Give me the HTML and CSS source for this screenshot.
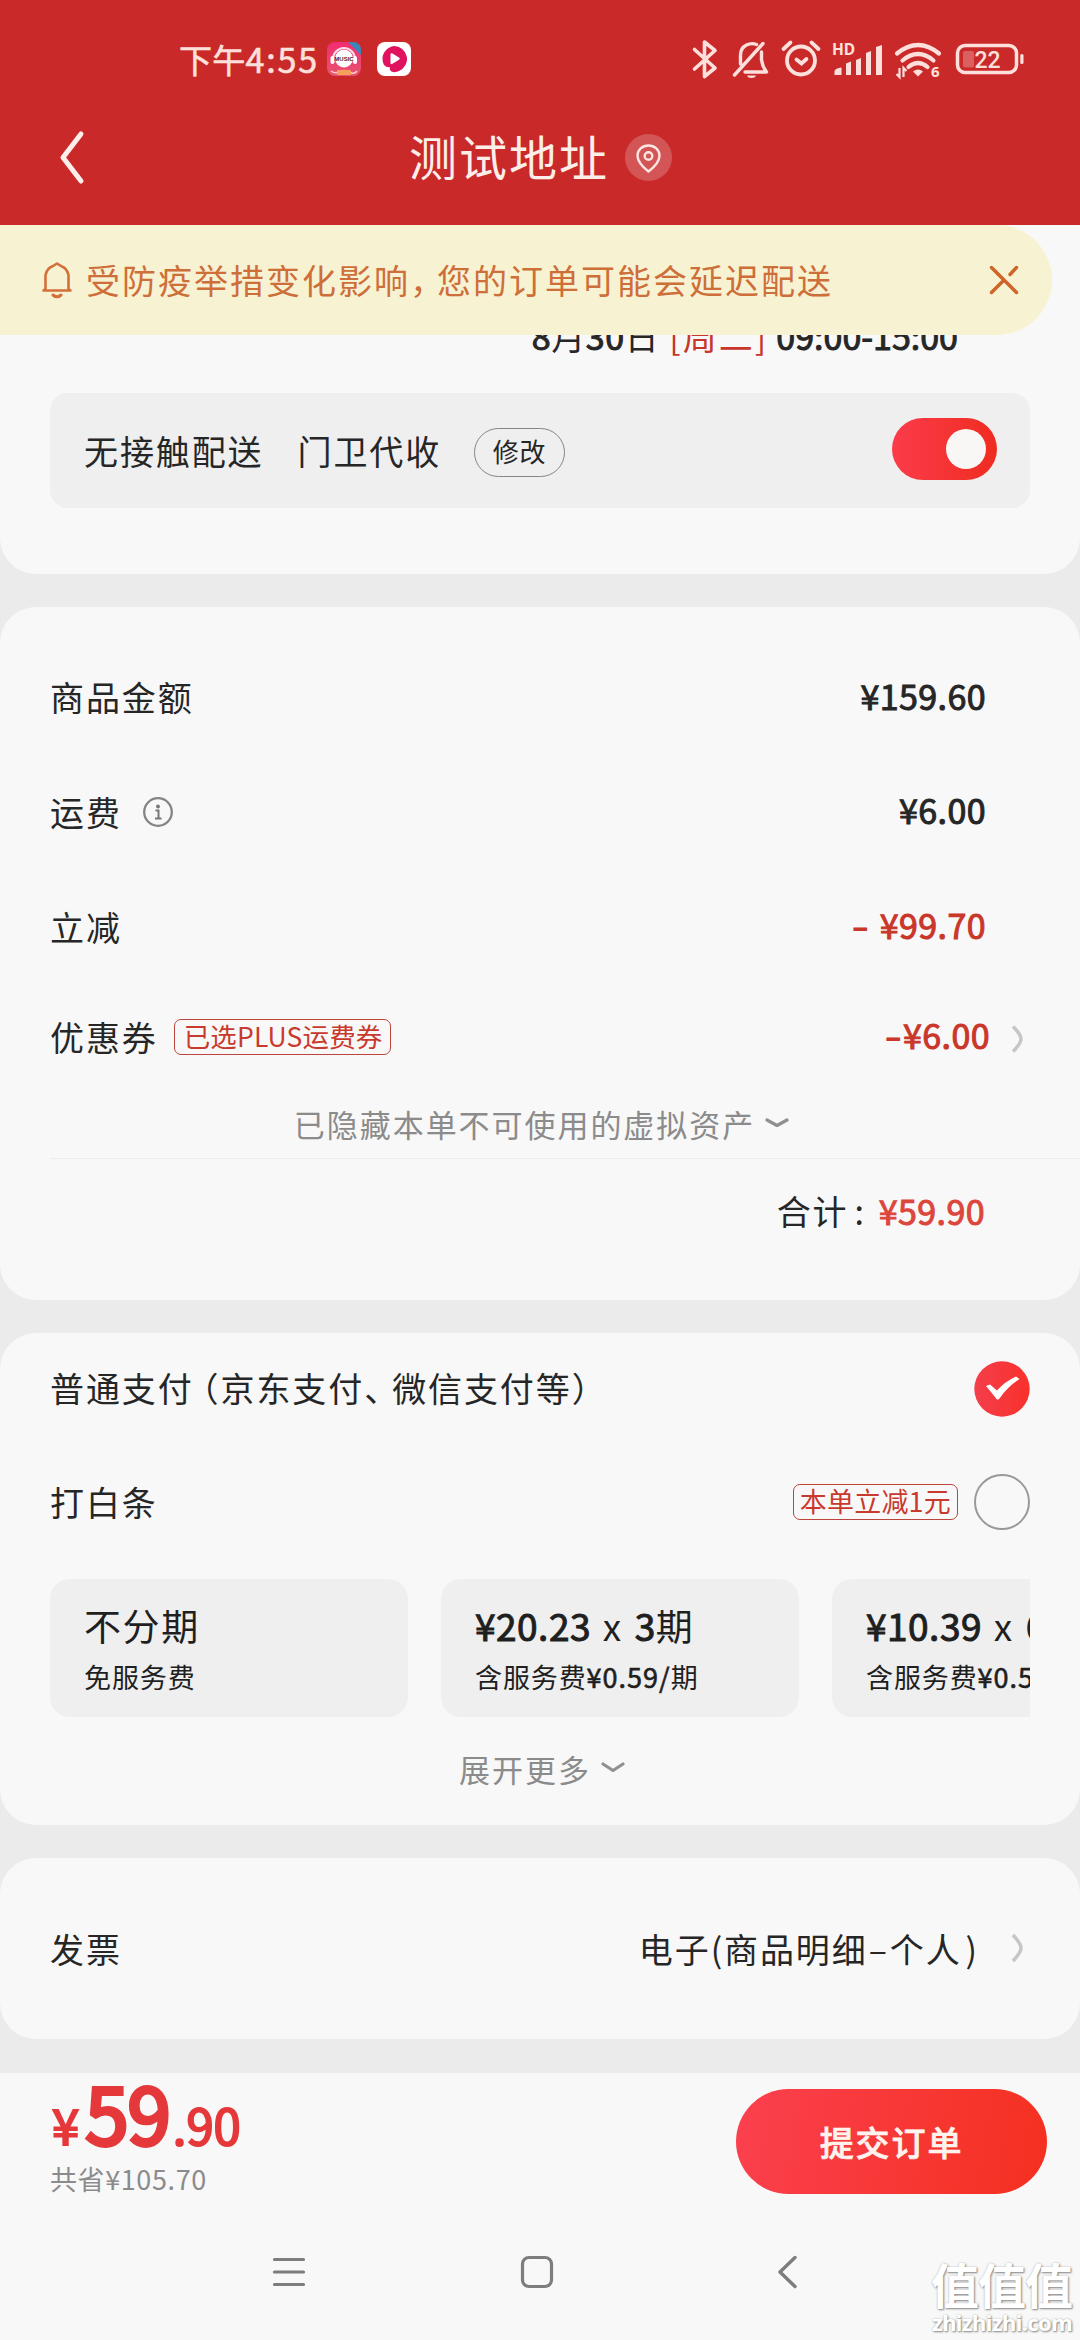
FILE: index.html
```html
<!DOCTYPE html>
<html lang="zh-CN">
<head>
<meta charset="utf-8">
<title>测试地址</title>
<link rel="stylesheet" href="styles.css">
</head>
<body>
<div class="screen">
  <header class="header">
    <div class="status">
      <span class="clock">下午<span class="digits">4:55</span></span>
      <svg class="app-icon" width="34" height="34" viewBox="0 0 34 34">
        <defs><linearGradient id="mg" x1="0" y1="0" x2="0" y2="1"><stop offset="0" stop-color="#f02c72"/><stop offset="1" stop-color="#e8556f"/></linearGradient></defs>
        <rect width="34" height="34" rx="8" fill="url(#mg)"/>
        <path d="M21 0h5a8 8 0 0 1 8 8v5z" fill="#3a86b8"/>
        <path d="M6 17a11 11 0 0 1 22 0" fill="none" stroke="#fbdbe8" stroke-width="2"/>
        <circle cx="17" cy="16.500" r="9" fill="#fff"/>
        <rect x="3.500" y="14" width="4" height="8" rx="2" fill="#fff"/>
        <rect x="26" y="14" width="4" height="8" rx="2" fill="#fff"/>
        <text x="17" y="18.800" class="music-word" text-anchor="middle">MUSIC</text>
        <path d="M4 29q4 3 8 1 5-3 10 0t8-1" fill="none" stroke="#ffd0c4" stroke-width="1.500"/>
        <rect x="10" y="28" width="14" height="5" rx="1" fill="#f5a15c"/>
      </svg>
      <svg class="app-icon second" width="34" height="34" viewBox="0 0 34 34">
        <rect width="34" height="34" rx="8" fill="#fff"/>
        <path d="M17 4a13 13 0 0 1 5 25q-3 1.500-6 1-4-1-3-5-3 1-6-2A13 13 0 0 1 17 4z" fill="#e0115f"/>
        <path d="M13.500 12.500q0-2 2-1l6.500 4q1.800 1.200 0 2.300l-6.500 4q-2 1-2-1z" fill="#fff"/>
      </svg>
      <div class="status-right">
        <svg width="42" height="60" viewBox="6 0 42 60"><path d="M13.500 19.500 34 38l-10.500 8.500V12L34 20.500 13.500 39" fill="none" stroke="#fde0dc" stroke-width="3.600" stroke-linejoin="round" stroke-linecap="round"/></svg>
        <svg width="48" height="60" viewBox="48 0 48 60" fill="none" stroke="#fde0dc" stroke-width="3.400" stroke-linecap="round" stroke-linejoin="round"><path d="M53.500 45 82 13.500M59.500 34V25q0-7 6-10 5-2.500 10-.5M80.500 22v8q1 7 5 12H64"/><path d="M66 45.500h9q-1 2.500-4.500 2.500t-4.500-2.500z" fill="#fde0dc" stroke="none"/></svg>
        <svg width="50" height="60" viewBox="96 0 50 60" fill="none" stroke="#fde0dc" stroke-width="3.800" stroke-linecap="round"><circle cx="120" cy="30.500" r="14"/><path d="m102.500 19 7-6.500M130.500 12.500l7 6.500M115.500 29.500l5 4 5-4.500"/></svg>
        <svg width="62" height="60" viewBox="146 0 62 60" fill="#fde0dc"><text class="hd" x="151" y="24.500">HD</text><path d="M153.500 45v-4q1-3 7-3.500V45zM165 45V33.500l5-2V45zM175 45V30l5-2V45zM185 45V23l5-2v24zM195 45V17l6-2v30z"/></svg>
        <svg width="60" height="60" viewBox="208 0 60 60"><g fill="none" stroke="#fde0dc" stroke-width="4.200" stroke-linecap="round"><path d="M216 23.500q21-17 42 0M221.500 30.500q15.500-13 31 0M227.500 37q9.500-8 19 0"/></g><path d="m237 46.500-5-5q5-4 10 0z" fill="#fde0dc"/><path d="M218.500 38v9l-3-3M222.500 47v-9l3 3" fill="none" stroke="#fde0dc" stroke-width="2.200"/><text class="six" x="250" y="47" fill="#fde0dc">6</text></svg>
        <svg width="76" height="60" viewBox="268 0 76 60"><rect x="276.500" y="15.500" width="59" height="27" rx="7.500" fill="none" stroke="#fde0dc" stroke-width="3.500"/><rect x="282" y="21" width="11" height="16.500" rx="2" fill="#dc5f60"/><text class="pct" x="293.500" y="38" fill="#fde0dc">22</text><rect x="339.300" y="24" width="3.200" height="10" rx="1.500" fill="#fde0dc"/></svg>
      </div>
    </div>
    <div class="titlebar">
      <svg class="back" width="30" height="60" viewBox="0 0 30 60"><path d="M24 7 6 30.500 24 54" fill="none" stroke="#fdeeea" stroke-width="5" stroke-linecap="round" stroke-linejoin="round"/></svg>
      <h1 class="title">测试地址</h1>
      <svg class="pin" width="47" height="47" viewBox="0 0 47 47"><circle cx="23.500" cy="23.500" r="23.500" fill="#d35556"/><g fill="none" stroke="#fde6e2" stroke-width="2.400" stroke-linejoin="round"><path d="M23.500 37.500Q12.500 29 12.500 21.500a11 10 0 0 1 22 0Q34.500 29 23.500 37.500z"/><circle cx="23.500" cy="22" r="3.800"/></g></svg>
    </div>
  </header>

  <main class="content">
    <div class="notice">
      <svg width="32" height="40" viewBox="0 0 32 40"><path d="M4.500 29V15q1.500-7 7.500-9l4-2.500L20 6q6 2 7.500 9v14l2 1.500h-27z" fill="none" stroke="#d3703a" stroke-width="2.600" stroke-linejoin="round"/><path d="M12 35q4 3.500 8 0" fill="none" stroke="#d3703a" stroke-width="3" stroke-linecap="round"/></svg>
      <p class="notice-text">受防疫举措变化影响<span class="half comma">，</span>您的订单可能会延迟配送</p>
      <svg class="close" width="32" height="32" viewBox="0 0 32 32"><path d="m3.500 3.500 25 25M3.500 28.500l12-12M22 10.500l6.500-7" stroke="#cf6427" stroke-width="3.400" stroke-linecap="round"/></svg>
    </div>

    <section class="card delivery">
      <p class="date"><b>8</b>月<b>30</b>日<em>[周二]</em><b>09:00-15:00</b></p>
      <div class="contactless">
        <span>无接触配送</span><span class="place">门卫代收</span>
        <span class="modify">修改</span>
        <span class="toggle"><i class="knob"></i></span>
      </div>
    </section>

    <section class="card amounts">
      <div class="row goods"><span>商品金额</span><b class="price">¥159.60</b></div>
      <div class="row fee"><span>运费</span>
        <svg class="info" width="32" height="32" viewBox="0 0 32 32"><circle cx="16" cy="16" r="13.800" fill="none" stroke="#848484" stroke-width="2.300"/><circle cx="16" cy="10.500" r="1.900" fill="#777"/><path d="M13.500 14.500h3v8M13 22.500h6.500" fill="none" stroke="#777" stroke-width="2"/></svg>
        <b class="price">¥6.00</b></div>
      <div class="row cut"><span>立减</span><b class="price red"><span class="minus spaced">-</span>¥99.70</b></div>
      <div class="row coupon"><span>优惠券</span><span class="tag">已选PLUS运费券</span><b class="price red"><span class="minus">-</span>¥6.00</b>
        <svg class="arrow" width="14" height="32" viewBox="0 0 14 32"><path d="M3 3.500q8 8 8 12.500t-8 12.500" fill="none" stroke="#c6c6c6" stroke-width="3.500"/></svg></div>
      <div class="more hidden-assets"><span>已隐藏本单不可使用的虚拟资产</span><svg width="24" height="12" viewBox="0 0 24 12"><path d="m2 3 10 5.500L22 3" fill="none" stroke="#909090" stroke-width="3.200" stroke-linejoin="round" stroke-linecap="round"/></svg></div>
      <div class="total"><span>合计<span class="colon">:</span></span><b class="price total-price">¥59.90</b></div>
    </section>

    <section class="card pay">
      <div class="row normal"><span>普通支付<span class="half paren-l">（</span>京东支付<span class="half pause">、</span>微信支付等<span class="half">）</span></span>
        <svg class="radio" width="56" height="56" viewBox="0 0 56 56"><defs><linearGradient id="cg"><stop offset="0" stop-color="#f43e4b"/><stop offset="1" stop-color="#f8312b"/></linearGradient></defs><circle cx="28" cy="28" r="27.700" fill="url(#cg)"/><path d="m12 25 4-1.500 7 6q8-9 19-14l3.500 2.500Q33 26 25.500 37.500q-1.500 2-3 .5Q18 32 12 25z" fill="#fff"/></svg></div>
      <div class="row baitiao"><span>打白条</span><span class="tag offer">本单立减1元</span><span class="radio empty"></span></div>
      <div class="plans">
        <div class="plan"><strong>不分期</strong><small>免服务费</small></div>
        <div class="plan"><strong><b>¥20.23</b> x <b>3</b>期</strong><small>含服务费<b>¥0.59/</b>期</small></div>
        <div class="plan"><strong><b>¥10.39</b> x <b>6</b>期</strong><small>含服务费<b>¥0.59/</b>期</small></div>
      </div>
      <div class="more expand"><span>展开更多</span><svg width="24" height="14" viewBox="0 0 24 14"><path d="m2 3 10 6.500L22 3" fill="none" stroke="#909090" stroke-width="3.200" stroke-linejoin="round" stroke-linecap="round"/></svg></div>
    </section>

    <section class="card invoice">
      <span>发票</span><span class="value">电子(商品明细<span class="dash">–</span>个人<span class="paren-r">)</span></span>
      <svg class="arrow" width="14" height="32" viewBox="0 0 14 32"><path d="M3 3q8 8.500 8 13t-8 13" fill="none" stroke="#c6c6c6" stroke-width="3.500"/></svg>
    </section>
  </main>

  <footer class="footer">
    <div class="checkout">
      <div class="sum">
        <p class="grand"><span class="yen">¥</span><span class="int">59</span><span class="dec">.90</span></p>
        <p class="saved">共省¥105.70</p>
      </div>
      <button class="submit">提交订单</button>
    </div>
    <nav class="sysnav">
      <svg width="36" height="36" viewBox="0 0 36 36"><path d="M3.500 5.500h29M3.500 18h29M3.500 30.500h29" stroke="#7d7d7d" stroke-width="3.200" stroke-linecap="round"/></svg>
      <svg width="36" height="36" viewBox="0 0 36 36"><rect x="3.500" y="3.500" width="29" height="29" rx="6.500" fill="none" stroke="#7d7d7d" stroke-width="3.200"/></svg>
      <svg width="36" height="36" viewBox="0 0 36 36"><path d="M28 3.500 13 18l15 14.500" fill="none" stroke="#7d7d7d" stroke-width="3.400" stroke-linecap="round" stroke-linejoin="round"/></svg>
    </nav>
    <div class="watermark"><span class="wm-name">值值值</span><span class="wm-url">zhizhizhi.com</span></div>
  </footer>
</div>
</body>
</html>
```
FILE: styles.css
```css
* { box-sizing: border-box; margin: 0; padding: 0; }
body { font-family: "Noto Sans CJK SC", sans-serif; background: #ebebeb; color: #262626; }
svg { display: block; flex: none; }
em { font-style: normal; }
b { font-weight: 400; -webkit-text-stroke: 1px currentColor; }
.screen { width: 1080px; height: 2340px; overflow: hidden; display: flex; flex-direction: column; font-size: 34px; letter-spacing: 1.9px; line-height: 50px; white-space: nowrap; }

.header { height: 225px; background: #c92a29; color: #fdeeea; flex: none; }
.status { height: 90px; padding: 30px 50px 0 179px; display: flex; align-items: flex-start; }
.clock { width: 148px; height: 60px; line-height: 58px; font-size: 33px; letter-spacing: 0.2px; color: #fde0dc; -webkit-text-stroke: 0.6px currentColor; }
.digits { font-size: 34px; letter-spacing: 1.9px; }
.app-icon { margin-top: 12px; }
.app-icon.second { margin-left: 16px; }
.music-word { font: bold 6px "Liberation Sans", sans-serif; letter-spacing: 0; fill: #4d2030; }
.status-right { margin-left: auto; display: flex; margin-right: 5px; }
.hd { font: bold 15.5px "Noto Sans", sans-serif; letter-spacing: 0; }
.six { font: bold 15px "Noto Sans", sans-serif; letter-spacing: 0; }
.pct { font: 500 23px Roboto, sans-serif; letter-spacing: 0; }
.titlebar { height: 135px; display: flex; align-items: flex-start; padding: 37px 0 0 57px; }
.title { margin-left: 322px; height: 58px; line-height: 56px; font-size: 48px; font-weight: 400; letter-spacing: 2px; }
.pin { margin: 7px 0 0 16px; }

.content { position: relative; flex: none; height: 1848px; display: flex; flex-direction: column; }
.notice { position: absolute; left: 0; top: 0; z-index: 2; width: 1052px; height: 110px; border-radius: 0 55px 55px 0; background: #f7f2d2; color: #ce6e38; display: flex; align-items: center; padding: 0 32px 0 41px; }
.notice-text { margin-left: 13px; letter-spacing: 2px; }
.half { font-feature-settings: "halt"; }
.comma { letter-spacing: 10px; }
.pause { letter-spacing: 11px; }
.paren-l { margin-left: 8px; }
.close { margin-left: auto; }

.card { background: #f8f8f8; border-radius: 36px; flex: none; }
.delivery { height: 349px; border-radius: 0 0 36px 36px; padding: 88px 50px 0; margin-bottom: 33px; }
.date { height: 45px; line-height: 45px; padding-right: 72px; text-align: right; letter-spacing: 0.6px; }
.date b:last-child { letter-spacing: 0; }
.date em { color: #c8352b; margin: 0 8px 0 10px; letter-spacing: 2px; }
.contactless { margin-top: 35px; height: 115px; border-radius: 18px; background: #efefef; padding: 0 33px 0 34px; display: flex; align-items: center; }
.place { margin-left: 34px; }
.modify { margin: 3px 0 0 33px; width: 91px; height: 49px; border: 1.500px solid #858585; border-radius: 25px; font-size: 26px; line-height: 44px; letter-spacing: 0.8px; text-align: center; }
.toggle { margin: 0 0 4px auto; width: 105px; height: 62px; border-radius: 31px; background: linear-gradient(90deg, #fa3c4a, #f02c20); padding: 11px; display: flex; justify-content: flex-end; }
.knob { width: 40px; height: 40px; border-radius: 50%; background: #f9f7f5; }

.row { display: flex; align-items: center; padding-left: 50px; }
.price { margin-left: auto; margin-bottom: 3px; letter-spacing: 0.4px; }
.red { color: #ca372a; }
.amounts { height: 693px; margin-bottom: 33px; padding-top: 33px; }
.goods { height: 114px; padding-right: 94px; }
.fee { height: 115px; padding-right: 94px; }
.info { margin-left: 20px; }
.cut { height: 115px; padding-right: 94px; }
.minus { display: inline-block; width: 19px; text-align: center; transform: scaleX(1.4); }
.spaced { margin-right: 10px; }
.coupon { height: 105px; padding-right: 56px; }
.tag { margin-left: 16px; height: 36px; border: 1.500px solid #bc463e; border-radius: 7px; color: #c93a2e; font-size: 26.500px; letter-spacing: 0.15px; line-height: 32px; padding: 0 8px 0 9px; }
.coupon .arrow { margin-left: 20px; margin-top: 5px; }
.more { display: flex; align-items: center; justify-content: center; color: #8b8b8b; font-size: 31px; letter-spacing: 1.95px; }
.more svg { margin-left: 10px; margin-top: -2px; }
.hidden-assets { height: 70px; margin-left: 50px; padding-right: 47px; border-bottom: 1.500px solid #ececec; }
.total { height: 103px; display: flex; align-items: center; padding-right: 95px; }
.total > span { margin-left: auto; }
.colon { margin-left: 6px; }
.total-price { margin: 0 0 0 13px; color: #dc463d; }

.pay { height: 492px; margin-bottom: 33px; padding-right: 50px; }
.normal { height: 112px; }
.normal > span { margin-bottom: 2px; }
.radio { margin-left: auto; width: 56px; height: 56px; }
.baitiao { height: 113px; }
.offer { margin-left: auto; font-size: 27px; letter-spacing: 0.2px; padding: 0 6px; }
.empty { margin-left: 16px; border: 2.500px solid #999; border-radius: 50%; }
.plans { margin: 21px 0 0 50px; display: flex; gap: 33px; overflow: hidden; }
.plan { flex: none; width: 358px; height: 138px; border-radius: 20px; background: #efefef; padding: 20px 0 0 34px; display: flex; flex-direction: column; color: #1f1f1f; }
.plan strong { font-weight: 400; font-size: 37px; line-height: 53px; letter-spacing: 1.6px; word-spacing: 2px; }
.plan strong b { letter-spacing: 0.5px; }
.plan small { font-size: 27px; line-height: 50px; letter-spacing: 0.9px; }
.plan small b { -webkit-text-stroke-width: 0.6px; letter-spacing: 1px; }
.expand { margin-top: 27px; height: 50px; padding-left: 54px; }

.invoice { height: 181px; display: flex; align-items: center; padding: 0 56px 0 50px; }
.value { margin-left: auto; }
.dash { margin: 0 1px; }
.paren-r { margin-left: 4px; }
.invoice .arrow { margin-left: 31px; margin-top: -2px; }

.footer { position: relative; height: 267px; background: #f8f8f8; flex: none; }
.checkout { display: flex; justify-content: space-between; padding: 0 33px 0 50px; height: 121px; }
.grand { height: 86px; line-height: 76px; color: #e5383b; display: flex; align-items: baseline; -webkit-text-stroke: 2px currentColor; letter-spacing: 0; font-size: 49px; }
.yen { margin: 0 6px 0 2px; }
.int { font-size: 78px; -webkit-text-stroke-width: 4px; letter-spacing: -1px; }
.dec { margin-left: 3px; }
.saved { font-size: 27px; line-height: 40px; color: #8b8b8b; letter-spacing: 0.6px; }
.submit { margin-top: 16px; width: 311px; height: 105px; border: 0; border-radius: 53px; background: linear-gradient(100deg, #fb404f, #f4301f); color: #fff3ee; font: 500 34px "Noto Sans CJK SC", sans-serif; letter-spacing: 1.9px; -webkit-text-stroke: 0.7px currentColor; }
.sysnav { display: flex; padding: 60px 0 0 271px; }
.sysnav svg + svg { margin-left: 212px; }
.watermark { position: absolute; right: 8px; bottom: 5px; display: flex; flex-direction: column; align-items: flex-end; color: #fff; text-shadow: 1px 1px 2px #888, 0 0 2px #bbb; }
.wm-name { font-size: 48px; line-height: 52px; font-weight: 700; letter-spacing: -1px; }
.wm-url { font: bold 22px/26px "Noto Sans", sans-serif; letter-spacing: -0.6px; }
```
